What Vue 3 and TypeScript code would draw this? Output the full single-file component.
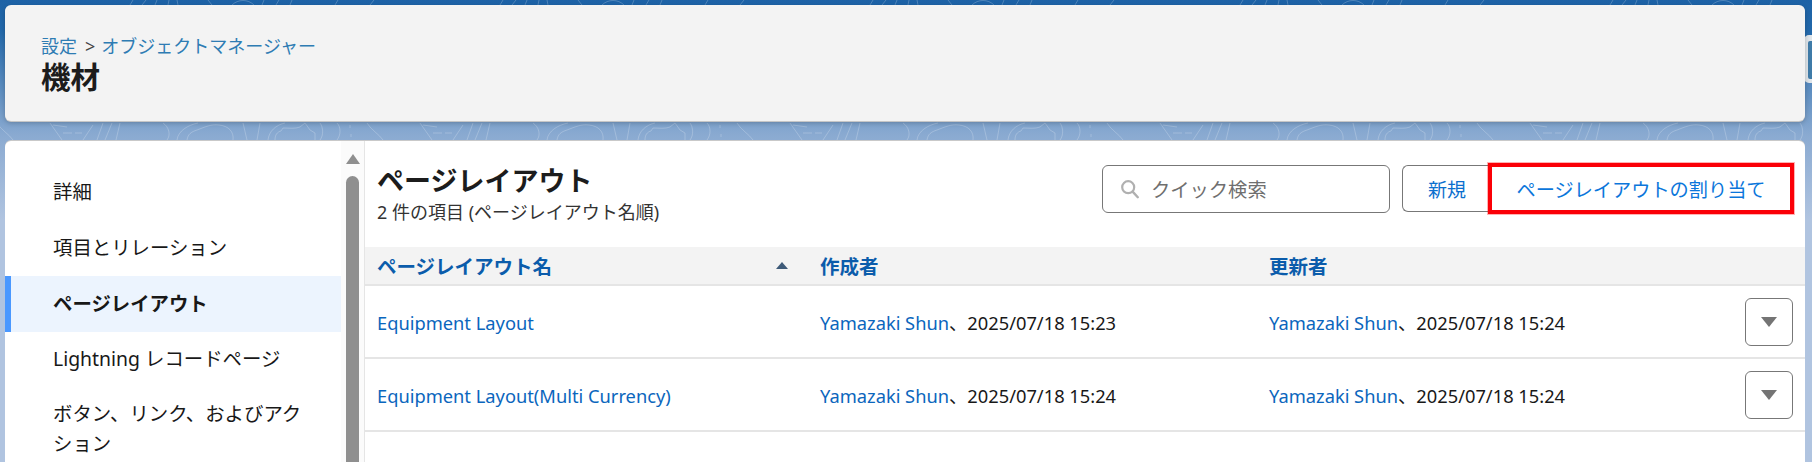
<script setup lang="ts">
interface LayoutRow {
  name: string
  createdAt: string
  updatedAt: string
}

const menu = [
  { label: '詳細' },
  { label: '項目とリレーション' },
  { label: 'ページレイアウト', active: true },
  { label: 'Lightning レコードページ' },
  { label: 'ボタン、リンク、およびアクション' },
]

const rows: LayoutRow[] = [
  { name: 'Equipment Layout', createdAt: '2025/07/18 15:23', updatedAt: '2025/07/18 15:24' },
  { name: 'Equipment Layout(Multi Currency)', createdAt: '2025/07/18 15:24', updatedAt: '2025/07/18 15:24' },
]

// backdrop motif repeats every 370px
const contourOffsets = [0, 370, 740, 1110, 1480]
</script>

<template>
  <div class="page">
    <!-- decorative contour lines of the backdrop -->
    <svg class="contours" width="1812" height="462" viewBox="0 0 1812 462" fill="none" aria-hidden="true">
      <g v-for="dx in contourOffsets" :key="dx" :transform="`translate(${dx} 0)`" stroke="#ffffff" stroke-opacity="0.22">
        <path d="M-3 123c4 7 12 11 16 17" />
        <path d="M50 123c4 6 8 11 12 17M53 125l14 2M63 133h9M75 133h7M93 125l-10 15M103 123l-6 17M112 123l-7 17M120 123l-4 17" />
        <path d="M163 123c6 4 8 12 4 17" />
        <path d="M198 123c-10 2-20 8-21 17M187 140c1-6 4-8 10-10c8-3 14-6 22-5c10 1 15 7 14 15" />
        <path d="M243 123l4 17M260 123l-3 17" />
        <path d="M285 123c-9 2-16 8-17 17M275 140c0-5 2-8 6-9l2-3c6 0 12 1 17-1l5-4l5 7l5 3v17" />
        <path d="M320 123c3 4 4 12 0 17M337 123c4 4 4 12 0 17M350 125v3M351 134v3" />
        <path d="M130 5l3-5M142 5l4-5M155 5l2-5M168 5l1-5M178 5l-1-5M212 5l-4-5M232 5c6-6 16-6 22 0M262 5l2-5M276 5l3-5M290 5l2-5M335 5l3-5M370 5l4-5" />
      </g>
    </svg>
    <div class="edge-tab"><span class="edge-tab-fill"></span></div>

    <header class="page-head">
      <div class="crumbs">
        <a class="crumb-link">設定</a><span class="crumb-sep">&gt;</span><a class="crumb-link">オブジェクトマネージャー</a>
      </div>
      <h1 class="object-name">機材</h1>
    </header>

    <main class="setup-card">
      <nav class="side">
        <ul class="side-list">
          <li v-for="item in menu" :key="item.label" class="side-item" :class="{ active: item.active }">
            {{ item.label }}
          </li>
        </ul>
        <div class="scroll-track">
          <span class="scroll-up"></span>
          <span class="scroll-thumb"></span>
        </div>
      </nav>

      <section class="content">
        <div class="content-head">
          <div class="content-title">
            <h2>ページレイアウト</h2>
            <p>2 件の項目 (ページレイアウト名順)</p>
          </div>
          <div class="actions">
            <label class="search">
              <svg width="20" height="20" viewBox="0 0 20 20" fill="none">
                <circle cx="8.2" cy="8.2" r="6" stroke="#b0b0b0" stroke-width="2.2" />
                <path d="M12.6 12.6l5.2 5.6" stroke="#b0b0b0" stroke-width="2.4" stroke-linecap="round" />
              </svg>
              <span>クイック検索</span>
            </label>
            <button class="btn-new">新規</button>
            <button class="btn-assign">ページレイアウトの割り当て</button>
          </div>
        </div>

        <div class="grid grid-head">
          <div class="col-name">
            <span>ページレイアウト名</span>
            <i class="sort-up"></i>
          </div>
          <div>作成者</div>
          <div>更新者</div>
        </div>
        <div v-for="row in rows" :key="row.name" class="grid grid-row">
          <div><a>{{ row.name }}</a></div>
          <div><a>Yamazaki Shun</a>、{{ row.createdAt }}</div>
          <div><a>Yamazaki Shun</a>、{{ row.updatedAt }}</div>
          <button class="row-menu" aria-label="actions"><i></i></button>
        </div>
      </section>
    </main>
  </div>
</template>

<style>
body {
  margin: 0;
  overflow: hidden;
}
</style>

<style scoped>
.page {
  position: relative;
  width: 1812px;
  height: 462px;
  overflow: hidden;
  box-sizing: border-box;
  padding: 5px 7px 0 5px;
  display: flex;
  flex-direction: column;
  gap: 20px;
  background: linear-gradient(180deg, #1d62a6 0, #2268aa 30px, #8aaad1 135px, #b0c4e0 220px);
  font-family: "Noto Sans", "Noto Sans CJK JP", sans-serif;
  color: #181818;
}

.contours {
  position: absolute;
  left: 0;
  top: 0;
}

.edge-tab {
  position: absolute;
  right: -8px;
  top: 35px;
  width: 16px;
  height: 48px;
  box-sizing: border-box;
  padding: 6px 0 4px 4px;
  background: #dfe5ea;
  border-radius: 5px;
}

.edge-tab-fill {
  display: block;
  height: 100%;
  background: #3f7ba8;
  border-radius: 2px;
}

.page-head {
  position: relative;
  height: 116px;
  flex: none;
  box-sizing: border-box;
  padding: 29px 37px 0 37px;
  background: #f3f3f3;
  border-radius: 6px;
  box-shadow: 0 1px 0 #c6c6c6, 0 2px 5px rgba(0, 0, 0, 0.22);
}

.crumbs {
  margin-left: -1px;
  font-size: 18px;
  line-height: 24px;
  color: #444;
}

.crumb-link {
  color: #2e7cb3;
}

.crumb-sep {
  margin: 0 6px 0 8px;
}

.object-name {
  margin: -1px 0 0 -1px;
  font-size: 29.5px;
  line-height: 40px;
  font-weight: 700;
  color: #1c1c1c;
}

.setup-card {
  position: relative;
  flex: 1;
  min-height: 0;
  display: flex;
  background: #fff;
  border-radius: 6px 6px 0 0;
  box-shadow: 0 -1px 0 #c9c9c9;
}

.side {
  width: 359px;
  flex: none;
  display: flex;
  border-right: 1px solid #e5e5e5;
  overflow: hidden;
}

.side-list {
  list-style: none;
  margin: 0;
  padding: 23.5px 0 0;
  width: 336px;
  flex: none;
}

.side-item {
  box-sizing: border-box;
  min-height: 55.5px;
  display: flex;
  align-items: center;
  padding: 12px 24px 12px 48px;
  font-size: 19.4px;
  line-height: 30px;
  color: #181818;
}

.side-item.active {
  height: 56px;
  font-weight: 700;
  background: #ecf4fe;
  box-shadow: inset 6px 0 0 #4a98ff;
}

.scroll-track {
  width: 23px;
  flex: none;
  display: flex;
  flex-direction: column;
  align-items: center;
  padding-top: 13px;
  background: #fbfbfb;
}

.scroll-up {
  width: 0;
  height: 0;
  border-left: 7px solid transparent;
  border-right: 7px solid transparent;
  border-bottom: 10px solid #8f8f8f;
}

.scroll-thumb {
  width: 13px;
  flex: 1;
  margin-top: 12px;
  background: #8f8f8f;
  border-radius: 7px 7px 0 0;
}

.content {
  flex: 1;
  min-width: 0;
}

.content-head {
  height: 106px;
  box-sizing: border-box;
  padding: 22px 11px 0 12px;
  display: flex;
  justify-content: space-between;
  align-items: flex-start;
}

.content-title h2 {
  margin: 0;
  font-size: 27px;
  line-height: 36px;
  font-weight: 700;
  color: #1c1c1c;
}

.content-title p {
  margin: 1px 0 0;
  font-size: 18px;
  line-height: 24px;
  color: #333;
}

.actions {
  display: flex;
  align-items: flex-start;
}

.search {
  width: 288px;
  height: 48px;
  box-sizing: border-box;
  display: flex;
  align-items: center;
  gap: 11px;
  padding-left: 17px;
  margin-right: 12px;
  margin-top: 2px;
  border: 1px solid #777;
  border-radius: 6px;
  font-size: 19.3px;
  color: #6f6f6f;
}

.btn-new {
  width: 86px;
  height: 47px;
  margin-top: 2px;
  padding: 0;
  text-align: left;
  text-indent: 25px;
  background: #fff;
  border: 1px solid #777;
  border-right: 0;
  border-radius: 6px 0 0 6px;
  font: inherit;
  font-size: 19px;
  color: #0b6fce;
}

.btn-assign {
  width: 306px;
  height: 51px;
  background: #fff;
  border: 4px solid #fb0007;
  box-shadow: 0 0 0 1px rgba(255, 0, 0, 0.3);
  padding: 0;
  font: inherit;
  font-size: 19.2px;
  color: #0b76db;
}

.grid {
  display: grid;
  grid-template-columns: 443px 449px 1fr;
  align-items: center;
  padding-left: 12px;
  box-sizing: border-box;
  position: relative;
  border-bottom: 2px solid #e5e5e5;
}

.grid-head {
  height: 39px;
  background: #f3f3f3;
  font-size: 19.5px;
  font-weight: 700;
  color: #0b5cab;
}

.col-name {
  display: flex;
  justify-content: space-between;
  align-items: center;
  padding-right: 32px;
}

.sort-up {
  width: 0;
  height: 0;
  border-left: 6px solid transparent;
  border-right: 6px solid transparent;
  border-bottom: 7px solid #3e5a78;
}

.grid-row {
  height: 73px;
  padding-top: 1px;
  font-size: 18.3px;
  color: #181818;
}

.grid-row a {
  color: #0b66bd;
}

.row-menu {
  position: absolute;
  right: 12px;
  top: 12px;
  width: 48px;
  height: 48px;
  padding: 0;
  display: flex;
  align-items: center;
  justify-content: center;
  background: #fff;
  border: 1px solid #777;
  border-radius: 6px;
}

.row-menu i {
  width: 0;
  height: 0;
  border-left: 8px solid transparent;
  border-right: 8px solid transparent;
  border-top: 10px solid #747474;
}
</style>
